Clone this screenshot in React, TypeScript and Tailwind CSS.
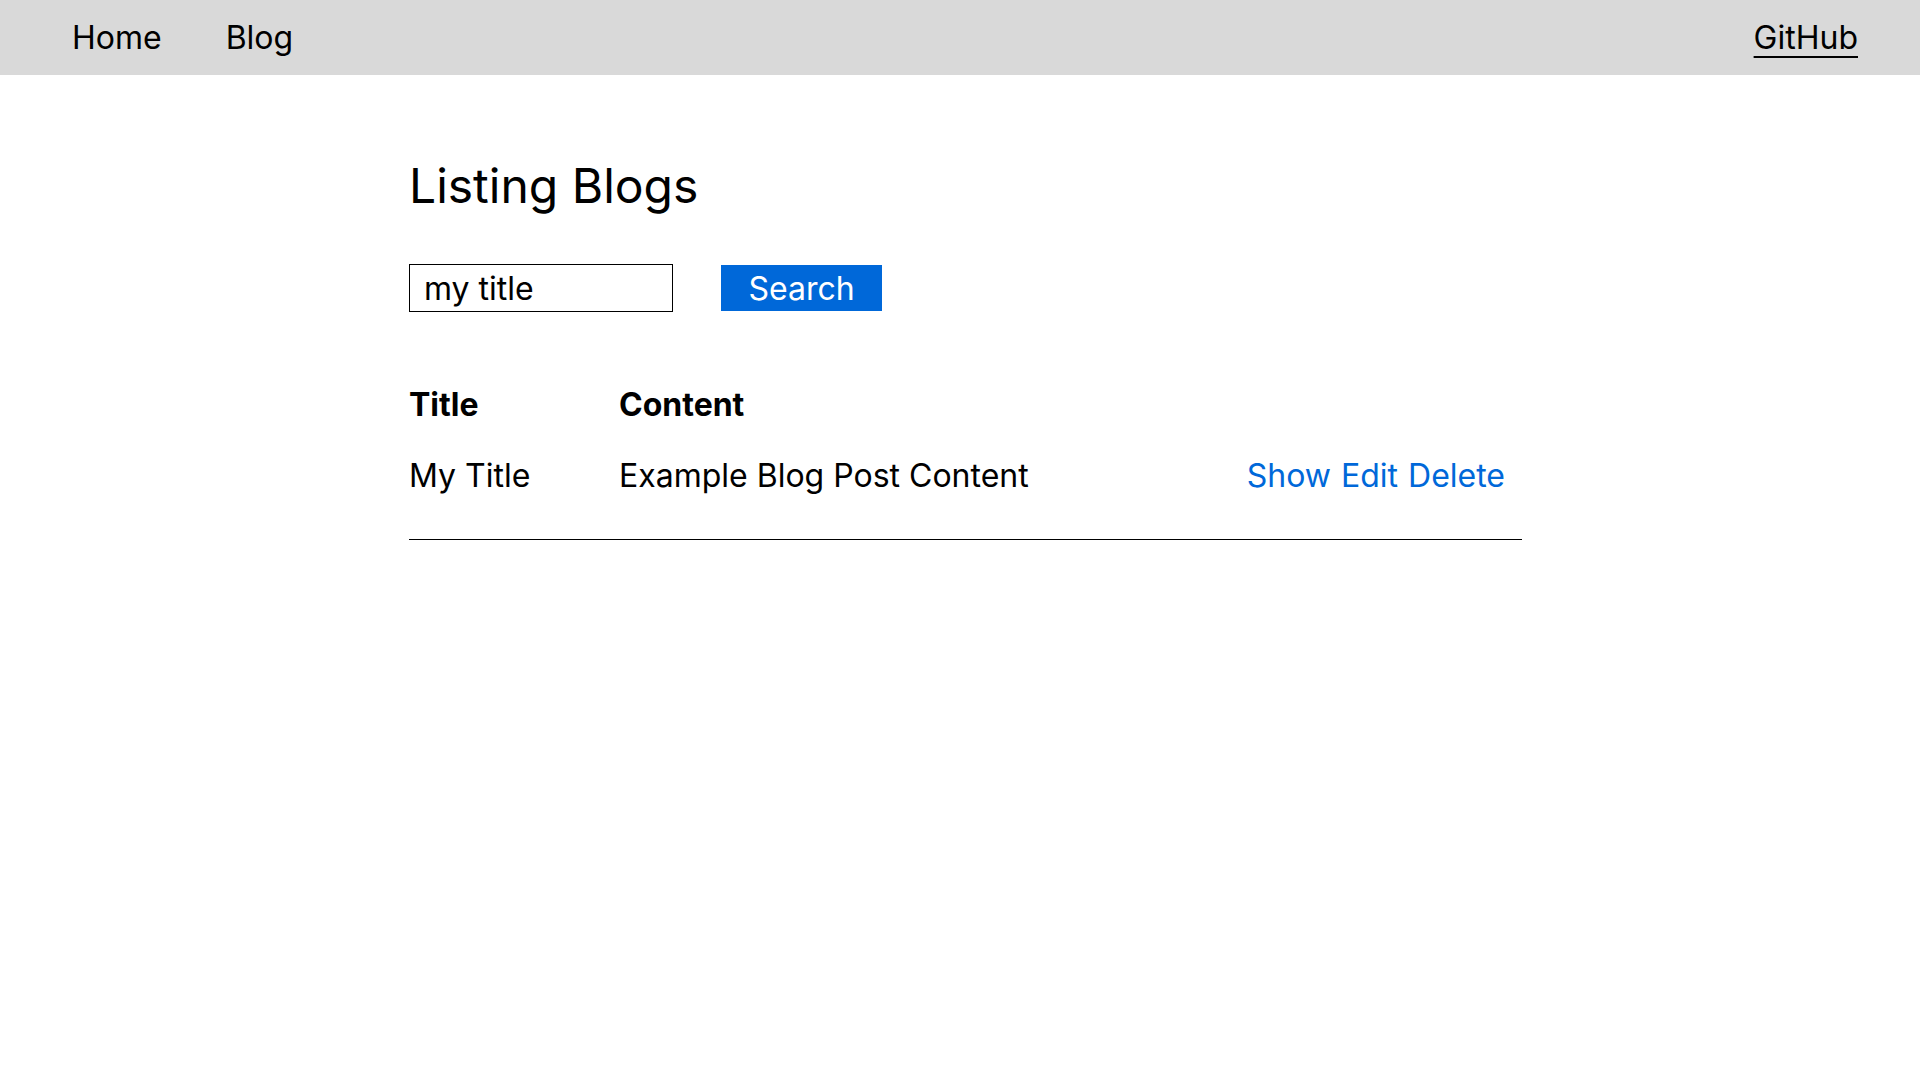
export default function App() {
  const font = { fontFamily: "Inter, 'Noto Sans', sans-serif" };
  return (
    <div className="min-h-screen w-full bg-white text-black" style={font}>
      <nav className="flex h-[75px] items-center bg-[#d9d9d9] pl-[72px] pr-[62px] text-[32px] leading-[normal]">
        <a className="text-black">Home</a>
        <a className="ml-[64px] text-black">Blog</a>
        <a className="ml-auto text-black underline decoration-[2px] underline-offset-[7px]">GitHub</a>
      </nav>
      <main className="pl-[409px] pr-[398px] pt-[81px]">
        <h1 className="text-[48px] font-normal leading-[normal]">Listing Blogs</h1>
        <div className="mt-[49px] flex items-center gap-[48px]">
          <input
            defaultValue="my title"
            className="h-[48px] w-[264px] border border-black px-[14px] text-[32px] leading-[normal] text-black outline-none"
            style={font}
          />
          <button
            className="h-[46px] w-[161px] bg-[#0068d9] text-[32px] leading-[normal] text-white"
            style={font}
          >
            Search
          </button>
        </div>
        <div className="mt-[73px] border-b border-black pb-[44px] text-[32px] leading-[normal]">
          <div className="grid grid-cols-[210px_1fr_auto] font-bold">
            <div>Title</div>
            <div>Content</div>
            <div />
          </div>
          <div className="mt-[32px] grid grid-cols-[210px_1fr_auto]">
            <div>My Title</div>
            <div>Example Blog Post Content</div>
            <div className="flex gap-[10px] pr-[17px] text-[#0068d9]">
              <a>Show</a>
              <a>Edit</a>
              <a>Delete</a>
            </div>
          </div>
        </div>
      </main>
    </div>
  );
}
